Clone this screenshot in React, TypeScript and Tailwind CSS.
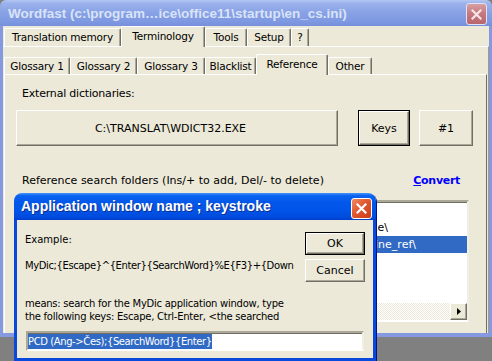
import React from "react";

const tabBase =
  "flex items-center justify-center whitespace-nowrap text-[10.5px] tracking-[-0.2px] border-t border-l border-t-white border-l-white border-r border-r-[#716f64] shadow-[inset_-1px_0_#aca899] rounded-t-[2px]";

function Tab({ label, w, sel, small }: { label: string; w: string; sel?: boolean; small?: boolean }) {
  const h = sel ? "h-[21px] -mb-px relative z-10 bg-[#ece9d8] pb-[2px]" : small ? "h-[17px]" : "h-[18px]";
  return <div className={`${tabBase} ${w} ${h}`}>{label}</div>;
}

const bevel =
  "border-t border-l border-t-white border-l-white border-b border-r border-b-[#716f64] border-r-[#716f64] shadow-[inset_-1px_-1px_#aca899] bg-[#ece9d8]";

function CloseX({ inactive }: { inactive?: boolean }) {
  return (
    <svg width="11" height="11" viewBox="0 0 11 11">
      <path d="M1.5 1.5 L9.5 9.5 M9.5 1.5 L1.5 9.5" stroke={inactive ? "#f4e6e8" : "#ffffff"} strokeWidth="2.2" strokeLinecap="square" />
    </svg>
  );
}

export default function App() {
  return (
    <div className="w-[492px] h-[361px] bg-[#808080] relative overflow-hidden font-['DejaVu_Sans',sans-serif] text-[11px] leading-[13px] text-black">
      {/* Main (inactive) window */}
      <div className="h-[337px] flex flex-col">
        <div className="h-[26px] shrink-0 flex items-center pl-[8px] pr-[5px] rounded-t-[6px] bg-[linear-gradient(to_bottom,#b4c8f4_0%,#9cb3ec_12%,#8aa3e6_45%,#7f99e2_80%,#7690dc_100%)]">
          <span className="font-['Liberation_Sans',sans-serif] font-bold text-[13.5px] text-[#d9e3f8] whitespace-nowrap">
            Wordfast (c:\program…ice\office11\startup\en_cs.ini)
          </span>
          <div className="ml-auto mt-[2px] w-[21px] h-[22px] rounded-[3px] border border-[#dfe3f5] bg-[linear-gradient(to_bottom,#d7a0a4_0%,#c67a80_45%,#b9666d_100%)] flex items-center justify-center">
            <CloseX inactive />
          </div>
        </div>
        <div className="flex-1 flex flex-col bg-[#ece9d8] border-x-[3px] border-b-[4px] border-[#8499e0] min-h-0">
          {/* row 1 tabs */}
          <div className="h-[20px] shrink-0 flex items-end pl-[1px]">
            <Tab label="Translation memory" w="w-[117px]" />
            <Tab label="Terminology" w="w-[84px]" sel />
            <Tab label="Tools" w="w-[42px]" />
            <Tab label="Setup" w="w-[44px]" />
            <Tab label="?" w="w-[18px]" />
          </div>
          {/* outer tab page */}
          <div className="flex-1 flex flex-col border-t border-t-white border-r border-r-[#9d9a8c] pl-[1px] pt-[7px] min-h-0">
            <div className="h-[20px] shrink-0 flex items-end">
              <Tab label="Glossary 1" w="w-[66px]" small />
              <Tab label="Glossary 2" w="w-[67px]" small />
              <Tab label="Glossary 3" w="w-[68px]" small />
              <Tab label="Blacklist" w="w-[51px]" small />
              <Tab label="Reference" w="w-[72px]" sel />
              <Tab label="Other" w="w-[44px]" small />
            </div>
            {/* inner tab page */}
            <div className="flex-1 flex flex-col border-t border-t-white border-l border-l-white border-r border-r-[#716f64] mr-[1px] min-h-0">
              <div className="ml-[17px] mt-[12px] h-[13px] whitespace-nowrap tracking-[-0.2px]">External dictionaries:</div>
              <div className="ml-[11px] mt-[10px] h-[36px] flex">
                <div className={`${bevel} w-[322px] h-full flex items-center justify-center pr-[13px] whitespace-nowrap`}>
                  C:\TRANSLAT\WDICT32.EXE
                </div>
                <div className="ml-[20px] w-[52px] h-full border border-black">
                  <div className={`${bevel} w-full h-full flex items-center justify-center`}>Keys</div>
                </div>
                <div className={`${bevel} ml-[9px] w-[54px] h-full flex items-center justify-center`}>#1</div>
              </div>
              <div className="ml-[17px] mt-[28px] w-[438px] h-[13px] flex justify-between whitespace-nowrap">
                <span>Reference search folders (Ins/+ to add, Del/- to delete)</span>
                <span className="font-bold text-[#0000ff] tracking-[-0.3px]">
                  <span className="underline">C</span>onvert
                </span>
              </div>
              <div className="ml-[11px] mt-[13px] w-[453px] h-[122px] border-2 border-t-[#aca899] border-l-[#aca899] border-b-white border-r-[#f1efe2] shadow-[inset_1px_1px_#716f64] bg-white flex flex-col">
                <div className="h-[17px] flex items-center pl-[2px] whitespace-nowrap">C:\Program Files\Wordfast\Reference\</div>
                <div className="h-[17px] flex items-center pl-[2px] whitespace-nowrap">
                  <span className="inline-block w-[368px] text-right">D:\Překlady\Reference\</span>
                </div>
                <div className="h-[17px] flex items-center pl-[2px] whitespace-nowrap bg-[#316ac5] text-white">
                  <span className="inline-block w-[396px] text-right">D:\Překlady\Machine_ref\</span>
                </div>
                <div className="mt-auto h-[17px] flex">
                  <div className={`${bevel} w-[17px] h-full flex items-center justify-center`}>
                    <svg width="4" height="7" viewBox="0 0 4 7">
                      <path d="M4 0 L0 3.5 L4 7 Z" fill="#000" />
                    </svg>
                  </div>
                  <div className="flex-1 h-full bg-[conic-gradient(#ffffff_25%,#ece9d8_0_50%,#ffffff_0_75%,#ece9d8_0)] bg-[length:2px_2px]" />
                  <div className={`${bevel} w-[17px] h-full flex items-center justify-center`}>
                    <svg width="4" height="7" viewBox="0 0 4 7">
                      <path d="M0 0 L4 3.5 L0 7 Z" fill="#000" />
                    </svg>
                  </div>
                </div>
              </div>
            </div>
          </div>
        </div>
      </div>

      {/* Dialog (active) */}
      <div className="absolute left-[14px] top-[193px] w-[362px] h-[168px] flex flex-col rounded-t-[8px] overflow-hidden shadow-[1px_1px_0_#00138c]">
        <div className="h-[27px] shrink-0 flex items-center pl-[7px] pr-[4px] bg-[linear-gradient(to_bottom,#4593fc_0%,#0b63ef_10%,#0257ea_35%,#0053e6_70%,#0049db_92%,#003ec8_100%)]">
          <span className="font-['Liberation_Sans',sans-serif] font-bold text-[14px] text-white whitespace-nowrap [text-shadow:1px_1px_#0c2f8f]">
            Application window name ; keystroke
          </span>
          <div className="ml-auto mt-[3px] w-[21px] h-[21px] rounded-[3px] border border-white bg-[linear-gradient(135deg,#f08a63_0%,#e2582f_45%,#c93c1a_100%)] flex items-center justify-center">
            <CloseX />
          </div>
        </div>
        <div className="flex-1 flex flex-col bg-[#ece9d8] border-x-[3px] border-b-[3px] border-[#0a48dc] px-[8px] pt-[12px] text-[10px]">
          <div className="flex justify-between">
            <div className="pt-[1px] w-[272px]">
              <div className="h-[13px] whitespace-nowrap">Example:</div>
              <div className="mt-[13px] h-[13px] whitespace-nowrap overflow-hidden tracking-[-0.4px]">MyDic;{"{Escape}^{Enter}{SearchWord}%E{F3}+{Down"}</div>
            </div>
            <div className="flex flex-col text-[11px]">
              <div className="w-[60px] h-[23px] border border-black">
                <div className={`${bevel} w-full h-full flex items-center justify-center`}>OK</div>
              </div>
              <div className={`${bevel} mt-[4px] w-[60px] h-[23px] flex items-center justify-center`}>Cancel</div>
            </div>
          </div>
          <div className="mt-[15px] whitespace-nowrap tracking-[-0.25px]">
            means: search for the MyDic application window, type
            <br />
            the following keys: Escape, Ctrl-Enter, &lt;the searched
          </div>
          <div className="mt-[8px] mx-[1px] h-[20px] border-2 border-t-[#aca899] border-l-[#aca899] border-b-white border-r-[#f1efe2] shadow-[inset_1px_1px_#716f64] bg-white flex items-center">
            <span className="bg-[#316ac5] text-white h-[15px] leading-[15px] whitespace-nowrap tracking-[-0.4px]">
              PCD (Ang-&gt;Čes);{"{SearchWord}{Enter}"}
            </span>
          </div>
        </div>
      </div>
    </div>
  );
}
